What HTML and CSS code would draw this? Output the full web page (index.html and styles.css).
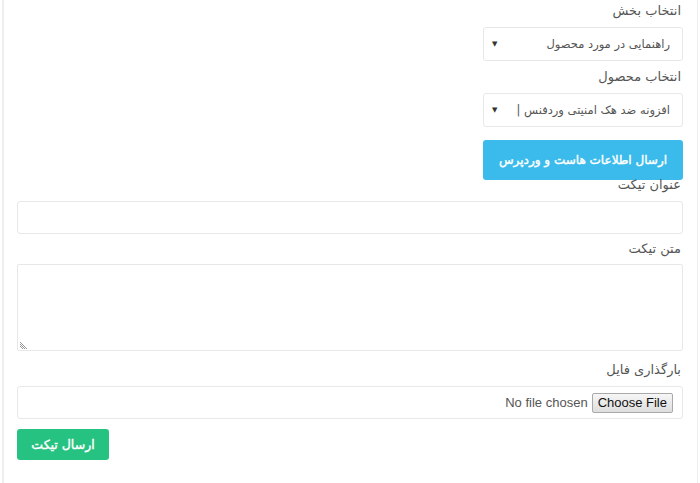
FILE: index.html
```html
<!DOCTYPE html>
<html lang="fa" dir="rtl">
<head>
<meta charset="utf-8">
<link rel="stylesheet" href="styles.css">
</head>
<body>
<div class="panel">
  <form class="form">
    <div class="group narrow">
      <label class="lbl">انتخاب بخش</label>
      <div class="select"><span>راهنمایی در مورد محصول</span><span class="caret">▼</span></div>
    </div>
    <div class="group narrow g2">
      <label class="lbl">انتخاب محصول</label>
      <div class="select"><span>افزونه ضد هک امنیتی وردفنس |</span><span class="caret">▼</span></div>
    </div>
    <button type="button" class="btn-blue">ارسال اطلاعات هاست و وردپرس</button>
    <div class="group g3">
      <label class="lbl">عنوان تیکت</label>
      <div class="input"></div>
    </div>
    <div class="group g4">
      <label class="lbl">متن تیکت</label>
      <div class="textarea"><svg class="grip" width="8" height="8" viewBox="0 0 8 8"><path d="M1 3 L6 8 M1 5 L4 8 M1 1 L8 8" stroke="#999" stroke-width="1" fill="none"/></svg></div>
    </div>
    <div class="group g5">
      <label class="lbl">بارگذاری فایل</label>
      <div class="input file"><span class="choose">Choose File</span><span class="nofile">No file chosen</span></div>
    </div>
    <button type="button" class="btn-green">ارسال تیکت</button>
  </form>
</div>
</body>
</html>
```
FILE: styles.css
```css
html, body { margin: 0; padding: 0; background: #fff; }
body { font-family: "DejaVu Sans", "Liberation Sans", sans-serif; }
.panel {
  margin-left: 2px;
  margin-right: 2px;
  border-left: 2px solid #eeeeee;
  border-right: 1px solid #f0f0f0;
  height: 483px;
  box-sizing: border-box;
  padding: 0 14px 0 13px;
}
.form { display: flex; flex-direction: column; align-items: stretch; }
.group { display: flex; flex-direction: column; }
.narrow { width: 200px; align-self: flex-start; }
.lbl {
  height: 20px;
  line-height: 20px;
  font-size: 13px;
  color: #555;
  margin-bottom: 6px;
  margin-right: 2px;
}
.group:first-child .lbl { margin-top: 1px; }
.g2 { margin-top: 6px; }
.select {
  height: 34px;
  box-sizing: border-box;
  border: 1px solid #e8e8e8;
  border-radius: 3px;
  display: flex;
  align-items: center;
  justify-content: space-between;
  padding: 0 12px 0 8px;
  font-size: 11.5px;
  color: #555;
}
.caret { font-size: 7px; color: #333; }
.btn-blue {
  margin-top: 13px;
  width: 200px;
  height: 40px;
  align-self: flex-start;
  background: #3bbbeb;
  border: none;
  border-radius: 3px;
  color: #fff;
  font-family: inherit;
  font-size: 12px;
  font-weight: normal;
  -webkit-text-stroke: 0.4px #fff;
  white-space: nowrap;
  padding: 0;
}
.g3 { margin-top: -5px; }
.input {
  height: 33px;
  box-sizing: border-box;
  border: 1px solid #e8e8e8;
  border-radius: 3px;
}
.g4 { margin-top: 5px; }
.g4 .lbl { margin-bottom: 5px; }
.textarea {
  height: 87px;
  box-sizing: border-box;
  border: 1px solid #e8e8e8;
  border-radius: 2px;
  position: relative;
}
.grip { position: absolute; left: 1px; bottom: 1px; }
.g5 { margin-top: 9px; }
.file {
  display: flex;
  align-items: center;
  padding: 0 9px;
  font-family: "Liberation Sans", Arial, sans-serif;
  font-size: 13px;
}
.choose {
  border: 1px solid #a9a9a9;
  border-radius: 2px;
  background: linear-gradient(#f6f6f6, #dedede);
  color: #111;
  padding: 0 5px;
  line-height: 18px;
  margin-left: 4px;
}
.nofile { color: #555; }
.btn-green {
  margin-top: 10px;
  width: 92px;
  height: 31px;
  align-self: flex-end;
  background: #26c281;
  border: none;
  border-radius: 3px;
  color: #fff;
  font-family: inherit;
  font-size: 12.5px;
  font-weight: normal;
  -webkit-text-stroke: 0.4px #fff;
  padding: 0;
}
```
